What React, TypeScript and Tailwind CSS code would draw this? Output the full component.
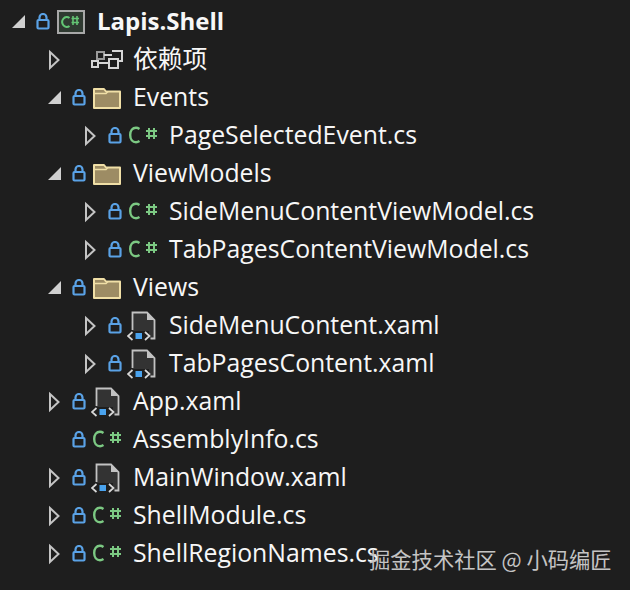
type IconKind = 'project' | 'deps' | 'folder' | 'cs' | 'xaml';

interface TreeRow {
  label: string;
  level: number;
  arrow?: 'open' | 'closed';
  icon: IconKind;
  lock?: boolean;
  bold?: boolean;
}

const rows: TreeRow[] = [
  { label: 'Lapis.Shell', level: 0, arrow: 'open', icon: 'project', lock: true, bold: true },
  { label: '依赖项', level: 1, arrow: 'closed', icon: 'deps' },
  { label: 'Events', level: 1, arrow: 'open', icon: 'folder', lock: true },
  { label: 'PageSelectedEvent.cs', level: 2, arrow: 'closed', icon: 'cs', lock: true },
  { label: 'ViewModels', level: 1, arrow: 'open', icon: 'folder', lock: true },
  { label: 'SideMenuContentViewModel.cs', level: 2, arrow: 'closed', icon: 'cs', lock: true },
  { label: 'TabPagesContentViewModel.cs', level: 2, arrow: 'closed', icon: 'cs', lock: true },
  { label: 'Views', level: 1, arrow: 'open', icon: 'folder', lock: true },
  { label: 'SideMenuContent.xaml', level: 2, arrow: 'closed', icon: 'xaml', lock: true },
  { label: 'TabPagesContent.xaml', level: 2, arrow: 'closed', icon: 'xaml', lock: true },
  { label: 'App.xaml', level: 1, arrow: 'closed', icon: 'xaml', lock: true },
  { label: 'AssemblyInfo.cs', level: 1, icon: 'cs', lock: true },
  { label: 'MainWindow.xaml', level: 1, arrow: 'closed', icon: 'xaml', lock: true },
  { label: 'ShellModule.cs', level: 1, arrow: 'closed', icon: 'cs', lock: true },
  { label: 'ShellRegionNames.cs', level: 1, arrow: 'closed', icon: 'cs', lock: true },
];

const indent = ['pl-[11px]', 'pl-[47px]', 'pl-[83px]'];

function Arrow({ kind }: { kind?: 'open' | 'closed' }) {
  return (
    <svg width="16" height="22" viewBox="0 0 16 22" className="shrink-0">
      {kind === 'open' && <path d="M1 17 L14 17 L14 4 Z" fill="#d0d0d0" />}
      {kind === 'closed' && <path d="M3 3 L11.5 11 L3 19 Z" fill="none" stroke="#c4c4c4" strokeWidth="2" />}
    </svg>
  );
}

function Lock() {
  return (
    <svg width="14" height="18" viewBox="0 0 14 18" className="shrink-0">
      <path d="M3.5 7 V4.5 a3.5 3.5 0 0 1 7 0 V7" fill="none" stroke="#5aa2e6" strokeWidth="2.2" />
      <rect x="1.5" y="7" width="11" height="8.5" rx="1" fill="#1e1e1e" stroke="#5aa2e6" strokeWidth="2.2" />
    </svg>
  );
}

function CSharp() {
  return (
    <svg width="30" height="24" viewBox="0 0 30 24" className="shrink-0">
      <path
        d="M10.5 5 C9 4 8 3.8 7 3.8 C3.5 3.8 1.2 6.8 1.2 11 C1.2 15.2 3.5 18.2 7 18.2 C8 18.2 9 18 10.5 17"
        fill="none"
        stroke="#7cc983"
        strokeWidth="2.4"
      />
      <path d="M20 4 V15 M25 4 V15 M17 7 H28 M17 12 H28" fill="none" stroke="#7cc983" strokeWidth="2" />
    </svg>
  );
}

function ProjectIcon() {
  return (
    <div className="flex h-[24px] w-[28px] shrink-0 items-center justify-center border-2 border-[#a8a8a8] bg-[#2f3a31]">
      <svg width="22" height="16" viewBox="0 0 22 16">
        <path d="M9.5 4 A4.5 5 0 1 0 9.5 12" fill="none" stroke="#63c574" strokeWidth="2" />
        <path d="M13 2 V11 M17 2 V11 M11.5 4.5 H19 M11.5 8.5 H19" fill="none" stroke="#63c574" strokeWidth="1.6" />
      </svg>
    </div>
  );
}

function DepsIcon() {
  return (
    <svg width="32" height="22" viewBox="0 0 32 22" className="-ml-[2px] shrink-0">
      <g fill="none" stroke="#d6d6d6" strokeWidth="2">
        <rect x="1" y="12" width="6" height="6" />
        <rect x="6" y="3" width="7" height="7" stroke="#9a9a9a" />
        <rect x="18" y="10" width="9" height="9" />
        <path d="M21 2 H31 V12 H27" />
        <path d="M7 14 H18 M13 6 H21" />
      </g>
    </svg>
  );
}

function FolderIcon() {
  return (
    <svg width="28" height="22" viewBox="0 0 28 22" className="shrink-0">
      <path
        d="M1 2 H11 L13 4.5 H27 V21 H1 Z"
        fill="#9d8c64"
        stroke="#f0dfa6"
        strokeWidth="2"
        strokeLinejoin="round"
      />
      <path d="M1 6.5 H13 L15 4.5" fill="none" stroke="#f0dfa6" strokeWidth="1.5" />
    </svg>
  );
}

function XamlIcon() {
  return (
    <svg width="30" height="30" viewBox="0 0 30 30" className="-ml-[2px] shrink-0">
      <path d="M5.5 20 V1.5 H20 L27.5 9 V27.5 H22 V20 Z" fill="#333333" />
      <path d="M5.5 19 V1.5 H20 L27.5 9 V27.5 H23.5" fill="none" stroke="#c2c2c2" strokeWidth="1.8" />
      <path d="M20 1.5 V9 H27.5 Z" fill="#c2c2c2" />
      <path d="M5.5 21 L1 25 L5.5 29 M18 21 L22.5 25 L18 29" fill="none" stroke="#d8d8d8" strokeWidth="1.7" />
      <rect x="8.5" y="22" width="6.5" height="6" fill="#4aa3ee" />
    </svg>
  );
}

function RowIcon({ kind }: { kind: IconKind }) {
  if (kind === 'project') return <ProjectIcon />;
  if (kind === 'deps') return <DepsIcon />;
  if (kind === 'folder') return <FolderIcon />;
  if (kind === 'xaml') return <XamlIcon />;
  return <CSharp />;
}

export default function App() {
  return (
    <div className="relative h-[590px] w-[630px] overflow-hidden bg-[#1e1e1e] pt-[3px] font-['Open_Sans','Noto_Sans_CJK_SC',sans-serif] text-[#f7f7f7]">
      {rows.map((row) => (
        <div key={row.label} className={`flex h-[38px] items-center whitespace-nowrap ${indent[row.level]}`}>
          <span className="flex w-[25px] shrink-0">
            <Arrow kind={row.arrow} />
          </span>
          <span className="flex w-[21px] shrink-0">{row.lock && <Lock />}</span>
          <span className="flex w-[40px] shrink-0">
            <RowIcon kind={row.icon} />
          </span>
          <span className={row.bold ? '-mt-[2px] text-[24px] font-bold' : '-mt-[2px] text-[24.8px]'}>{row.label}</span>
        </div>
      ))}
      <div className="absolute left-[369px] top-[543px] whitespace-nowrap font-['Noto_Sans_CJK_SC',sans-serif] text-[21.3px] text-[#c4c4c4]">
        掘金技术社区 @ 小码编匠
      </div>
    </div>
  );
}
